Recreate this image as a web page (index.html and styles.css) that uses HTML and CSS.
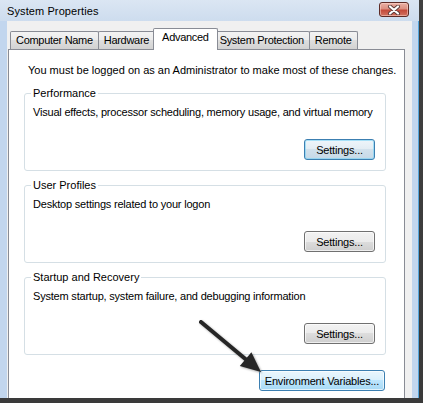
FILE: index.html
```html
<!DOCTYPE html>
<html lang="en">
<head>
  <meta charset="UTF-8">
  <meta name="viewport" content="width=device-width, initial-scale=1.0">
  <title>System Properties</title>
  <link rel="stylesheet" href="styles.css">
</head>
<body>
  <div class="shot">
    <div class="window">
      <!-- Title bar -->
      <div class="titlebar">
        <span class="title">System Properties</span>
        <button class="close-btn" aria-label="Close">
          <svg width="14" height="10" viewBox="0 0 14 10">
            <path d="M3 1.5 L11 8.5 M11 1.5 L3 8.5" stroke="#5a3a38" stroke-width="4" stroke-linecap="round"/>
            <path d="M3 1.5 L11 8.5 M11 1.5 L3 8.5" stroke="#ffffff" stroke-width="2.2" stroke-linecap="round"/>
          </svg>
        </button>
      </div>

      <div class="frame">
        <div class="edge edge-left"></div>

        <div class="client">
          <div class="tabs">
            <div class="tab">Computer Name</div>
            <div class="tab">Hardware</div>
            <div class="tab active">Advanced</div>
            <div class="tab">System Protection</div>
            <div class="tab">Remote</div>
          </div>

          <div class="panel">
            <p class="intro">You must be logged on as an Administrator to make most of these changes.</p>

            <fieldset class="group">
              <legend>Performance</legend>
              <p class="group-text">Visual effects, processor scheduling, memory usage, and virtual memory</p>
              <div class="group-actions">
                <button class="btn btn-default">Settings...</button>
              </div>
            </fieldset>

            <fieldset class="group">
              <legend>User Profiles</legend>
              <p class="group-text">Desktop settings related to your logon</p>
              <div class="group-actions">
                <button class="btn">Settings...</button>
              </div>
            </fieldset>

            <fieldset class="group">
              <legend>Startup and Recovery</legend>
              <p class="group-text">System startup, system failure, and debugging information</p>
              <div class="group-actions">
                <button class="btn">Settings...</button>
              </div>
            </fieldset>

            <div class="panel-actions">
              <button class="btn btn-hot">Environment Variables...</button>
            </div>

            <!-- pointer arrow drawn over the panel -->
            <svg class="arrow" width="80" height="70" viewBox="0 0 80 70">
              <line x1="7" y1="7" x2="52" y2="44.5" stroke="#262626" stroke-width="4" stroke-linecap="round"/>
              <polygon points="67,57 45.8,51.1 57.4,37.3" fill="#262626"/>
            </svg>
          </div>
        </div>

        <div class="edge edge-right"></div>
      </div>
    </div>
  </div>
</body>
</html>
```

FILE: styles.css
```css
:root {
  --dialog-bg: #f0f0f0;
  --frame: #c2d6ee;
  --tab-border: #898c95;
  --group-border: #d5dfe5;
  --text: #000000;
}

* {
  box-sizing: border-box;
}

body {
  margin: 0;
  background: #ffffff;
  font-family: "Liberation Sans", Arial, sans-serif;
  font-size: 11px;
  color: var(--text);
}

p {
  margin: 0;
}

/* screenshot drop shadow on right and bottom */
.shot {
  width: 423px;
  height: 403px;
  padding: 0 4px 5px 0;
  background: linear-gradient(#404040, #3a3a3a);
}

.window {
  width: 419px;
  height: 398px;
  display: flex;
  flex-direction: column;
  overflow: hidden;
}

/* Title bar */
.titlebar {
  height: 21px;
  flex: none;
  display: flex;
  justify-content: space-between;
  align-items: flex-start;
  padding: 0 10px 0 7px;
  background: linear-gradient(#dbe6f3, #cddcee);
}

.title {
  font-size: 11px;
  line-height: 22px;
  letter-spacing: 0.1px;
  color: #000;
}

.close-btn {
  width: 30px;
  height: 15px;
  margin-top: 2px;
  padding: 0;
  display: flex;
  align-items: center;
  justify-content: center;
  border: 1px solid #5e2b26;
  border-radius: 3px;
  background: linear-gradient(#eab0a5 0%, #dc9082 45%, #c44a3a 55%, #d27362 100%);
  box-shadow: inset 0 0 0 1px rgba(255, 220, 210, 0.5);
}

/* Window body */
.frame {
  flex: 1;
  display: flex;
  min-height: 0;
}

.edge {
  flex: none;
  background: var(--frame);
}

.edge-left {
  width: 7px;
}

.edge-right {
  width: 7px;
  border-right: 1px solid #55a6dc;
}

.client {
  flex: 1;
  min-width: 0;
  display: flex;
  flex-direction: column;
  padding: 7px 7px 0 1px;
  background: var(--dialog-bg);
}

/* Tabs */
.tabs {
  height: 21px;
  display: flex;
  align-items: flex-end;
  padding-left: 2px;
}

.tab {
  height: 18px;
  padding: 0 5px;
  line-height: 17px;
  letter-spacing: -0.3px;
  white-space: nowrap;
  border: 1px solid var(--tab-border);
  border-bottom: none;
  border-radius: 2px 2px 0 0;
  background: linear-gradient(#f3f3f3 0%, #ebebeb 50%, #dedede 50%, #d2d2d2 100%);
}

.tab + .tab {
  margin-left: -1px;
}

.tab.active {
  height: 22px;
  margin: 0 -2px -1px -2px;
  padding: 0 8px;
  background: #ffffff;
  z-index: 1;
}

.tab.active + .tab {
  margin-left: -2px;
}

/* Tab page */
.panel {
  flex: 1;
  position: relative;
  display: flex;
  flex-direction: column;
  padding: 13px 18px 0 15px;
  background: #ffffff;
  border: 1px solid var(--tab-border);
  border-bottom: none;
}

.intro {
  line-height: 14px;
  margin: 0 0 9px 4px;
  white-space: nowrap;
}

.group {
  margin: 0 0 7px 0;
  min-width: 0;
  padding: 0 10px 10px 8px;
  border: 1px solid var(--group-border);
  border-radius: 3px;
}

.group legend {
  padding: 0 2px;
  margin-left: -2px;
  line-height: 14px;
}

.group-text {
  margin-top: 5px;
  line-height: 14px;
  letter-spacing: -0.2px;
  white-space: nowrap;
}

.group-actions {
  display: flex;
  justify-content: flex-end;
  margin-top: 20px;
}

.panel-actions {
  display: flex;
  justify-content: flex-end;
  margin-top: 8px;
  padding-right: 1px;
}

/* Buttons */
.btn {
  height: 21px;
  min-width: 71px;
  padding: 0 5px;
  font-family: "Liberation Sans", Arial, sans-serif;
  font-size: 11px;
  letter-spacing: -0.2px;
  color: #000;
  border: 1px solid #707070;
  border-radius: 3px;
  background: linear-gradient(#f2f2f2 0%, #ebebeb 50%, #dddddd 50%, #cfcfcf 100%);
  box-shadow: inset 0 0 0 1px rgba(255, 255, 255, 0.65);
}

.btn-default {
  border-color: #3c7fb1;
  background: linear-gradient(#eef5fa 0%, #e2ecf3 50%, #d2e1ec 50%, #c6d9e7 100%);
  box-shadow: inset 0 0 0 1px rgba(120, 210, 245, 0.6);
}

.btn-hot {
  min-width: 126px;
  border-color: #3c7fb1;
  background: linear-gradient(#eaf6fd 0%, #d9f0fc 50%, #bee6fd 50%, #a7d9f5 100%);
}

/* Arrow overlay */
.arrow {
  position: absolute;
  left: 185px;
  top: 265px;
  filter: drop-shadow(1px 1px 1px rgba(0, 0, 0, 0.35));
}
```
